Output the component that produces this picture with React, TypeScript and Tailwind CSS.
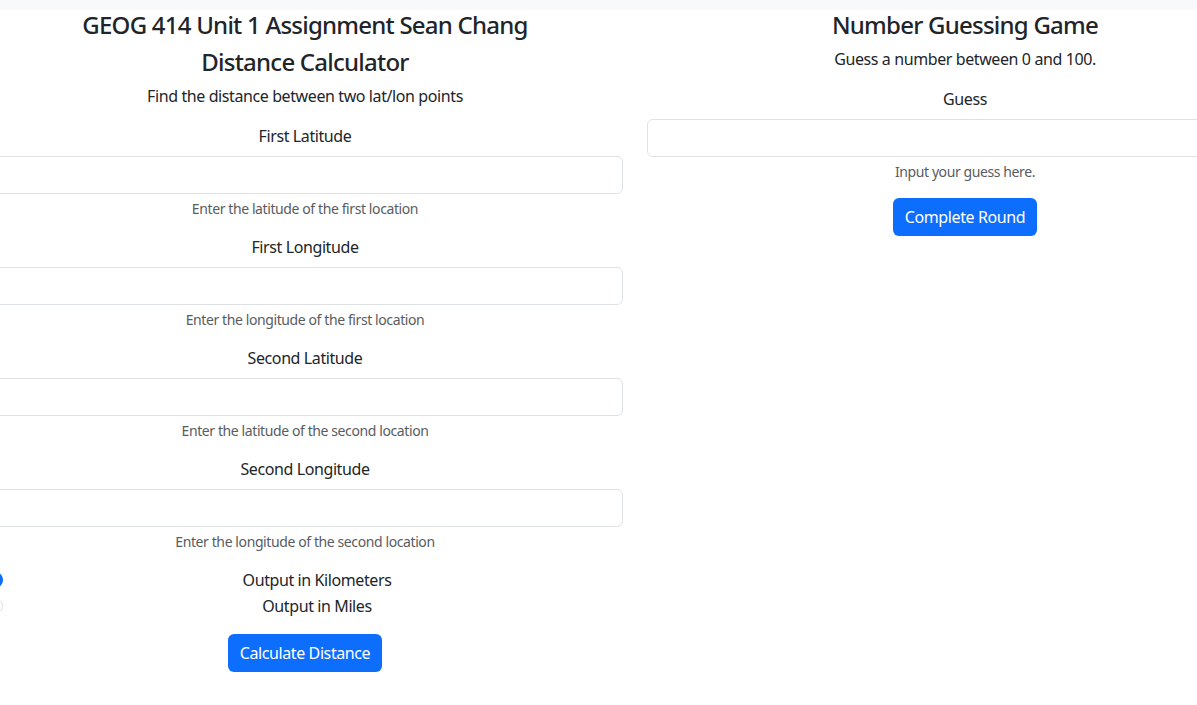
import React from "react";

const font = { fontFamily: '"Noto Sans", "Open Sans", sans-serif' };

function Field({ label, help }: { label: string; help: string }) {
	return (
		<div className="mb-4">
			<label className="block mb-2 text-base leading-6 text-[#212529]">{label}</label>
			<input
				type="text"
				className="block w-full h-[38px] px-3 rounded-md border border-[#dee2e6] bg-white outline-none"
			/>
			<div className="mt-1 text-sm leading-[21px] text-[#595c5f]">{help}</div>
		</div>
	);
}

function Radio({ label, checked }: { label: string; checked?: boolean }) {
	return (
		<div className="flex items-start h-6 mb-[2px]">
			{checked ? (
				<span className="mt-1 w-4 h-4 shrink-0 rounded-full bg-[#0d6efd] flex items-center justify-center">
					<span className="w-[6px] h-[6px] rounded-full bg-white" />
				</span>
			) : (
				<span className="mt-1 w-4 h-4 shrink-0 rounded-full border border-[#dee2e6] bg-white" />
			)}
			<span className="flex-1 pl-2 text-base leading-6 text-[#212529]">{label}</span>
		</div>
	);
}

const h4 = "text-2xl leading-[29px] font-medium mb-2 text-[#212529] tracking-[-0.032em]";

export default function App() {
	return (
		<div className="w-[1197px] h-[705px] overflow-hidden bg-white text-center tracking-[-0.025em]" style={font}>
			<div className="h-[10px] bg-[#f8f9fa]" />
			<div className="ml-[-13px] w-[1296px] grid grid-cols-2 gap-6">
				<section>
					<h4 className={h4}>GEOG 414 Unit 1 Assignment Sean Chang</h4>
					<h4 className={h4}>Distance Calculator</h4>
					<p className="text-base leading-6 mb-4 text-[#212529]">Find the distance between two lat/lon points</p>
					<Field label="First Latitude" help="Enter the latitude of the first location" />
					<Field label="First Longitude" help="Enter the longitude of the first location" />
					<Field label="Second Latitude" help="Enter the latitude of the second location" />
					<Field label="Second Longitude" help="Enter the longitude of the second location" />
					<div className="mb-4">
						<Radio label="Output in Kilometers" checked />
						<Radio label="Output in Miles" />
					</div>
					<button className="h-[38px] px-3 rounded-md bg-[#0d6efd] text-white text-base">Calculate Distance</button>
				</section>
				<section>
					<h4 className={h4}>Number Guessing Game</h4>
					<p className="text-base leading-6 mb-4 text-[#212529]">Guess a number between 0 and 100.</p>
					<Field label="Guess" help="Input your guess here." />
					<button className="h-[38px] px-3 rounded-md bg-[#0d6efd] text-white text-base">Complete Round</button>
				</section>
			</div>
		</div>
	);
}
